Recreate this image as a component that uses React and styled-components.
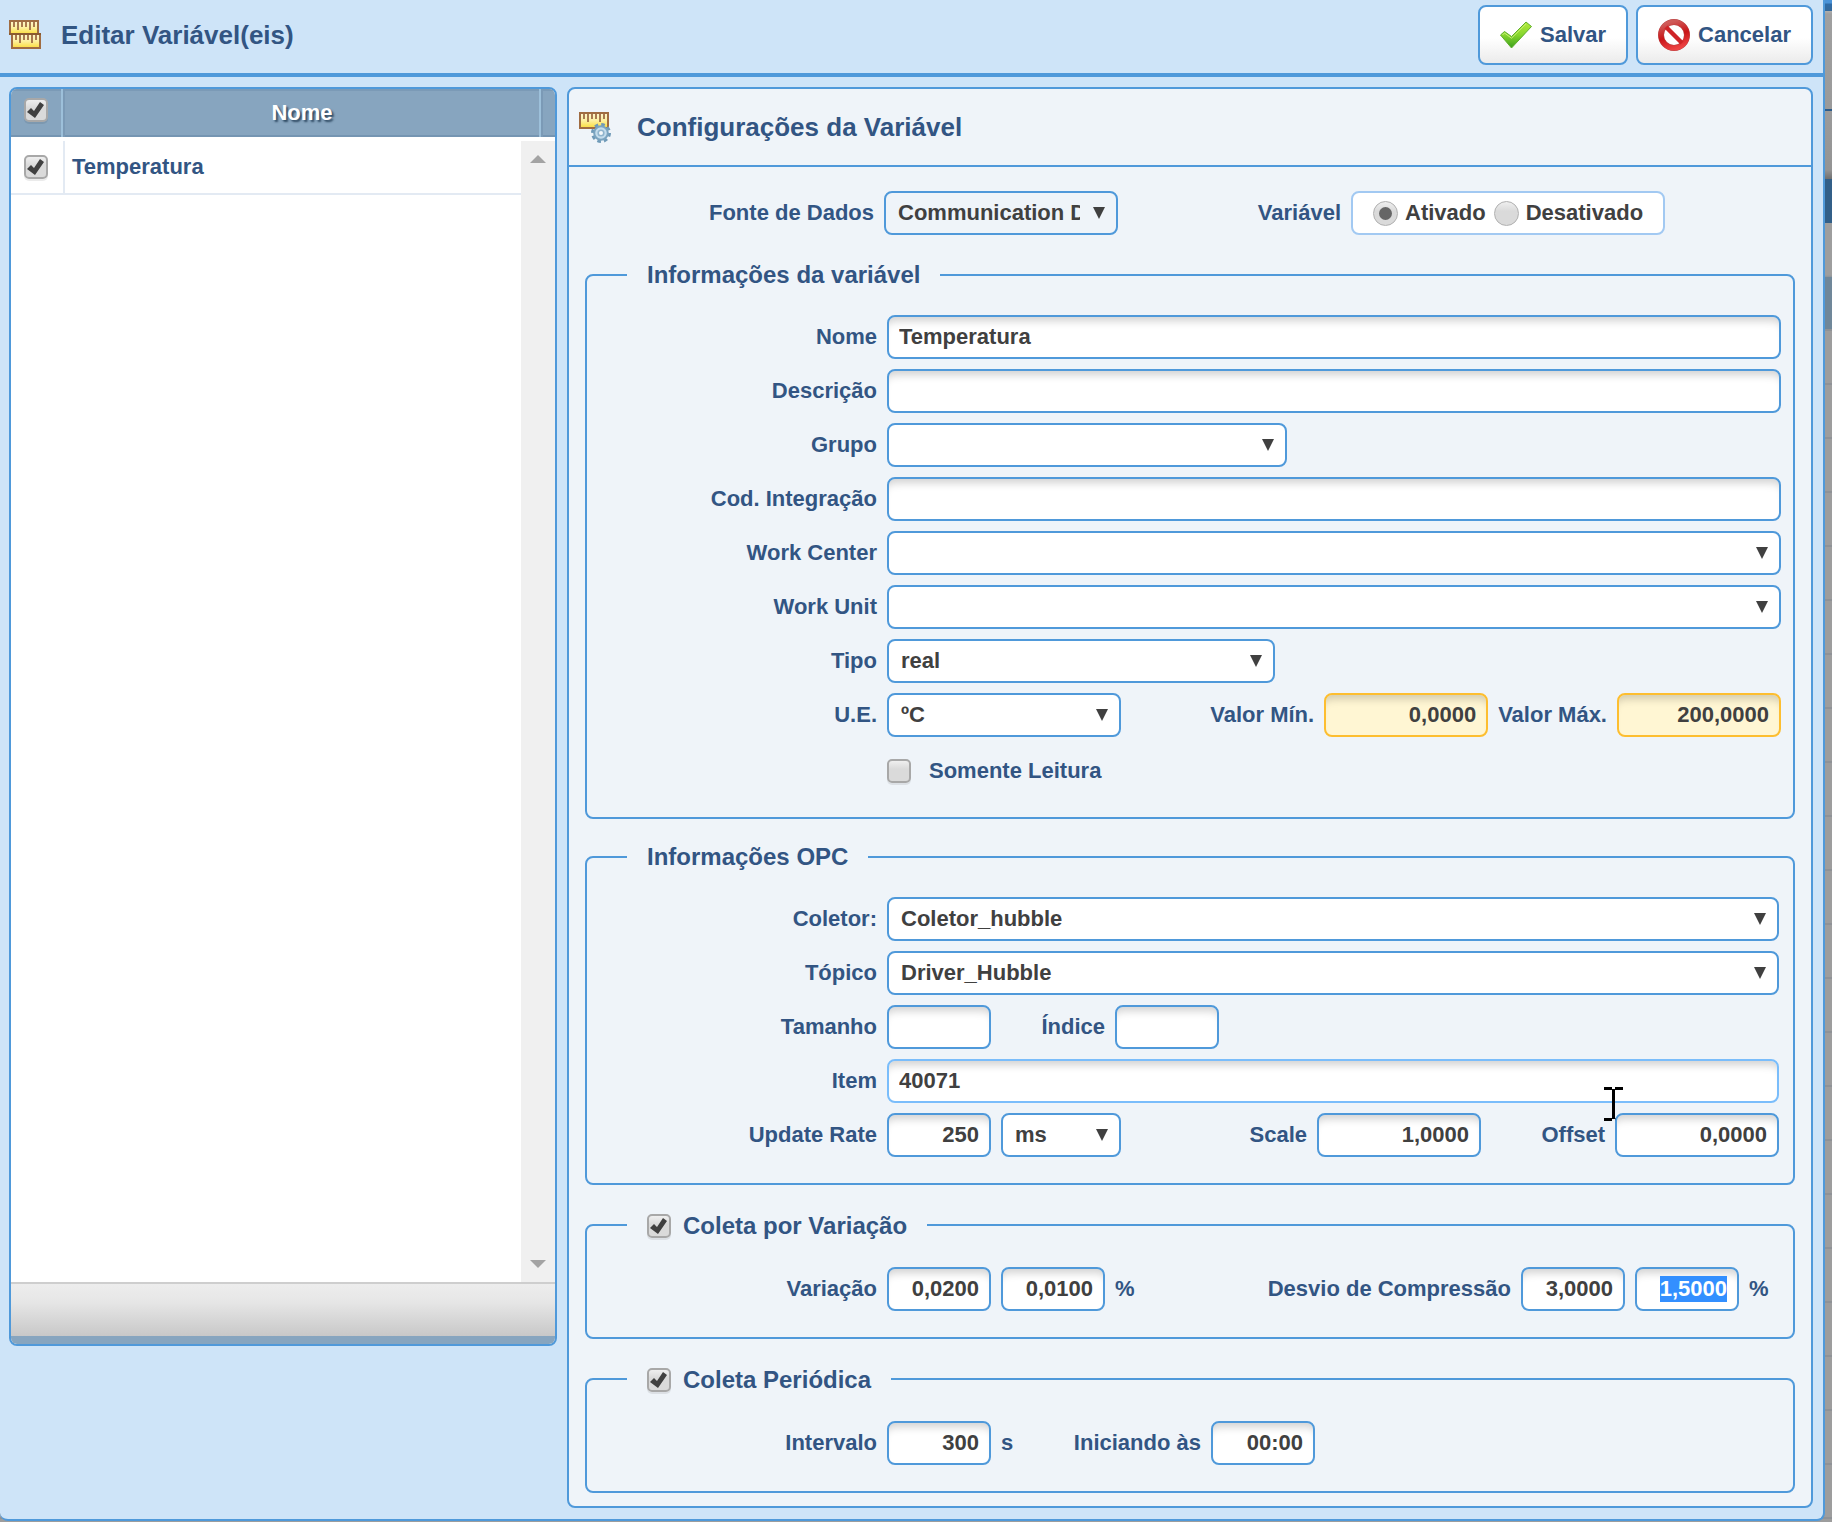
import React, { useEffect, useRef } from 'react'
import styled, { createGlobalStyle, css } from 'styled-components'

const rows = [{ id: 1, name: 'Temperatura' }];

const RulerIcon = () => (
    <svg width="32" height="30" viewBox="0 0 32 30" aria-hidden="true">
        <defs>
            <linearGradient id="ruler" x1="0" y1="0" x2="0" y2="1">
                <stop offset="0" stopColor="#fdf6cf" />
                <stop offset="0.5" stopColor="#fdf0a0" />
                <stop offset="1" stopColor="#fbdc3c" />
            </linearGradient>
        </defs>
        <rect x="1" y="1" width="28" height="13" fill="url(#ruler)" stroke="#a06c42" strokeWidth="2" />
        <path d="M5 2v5M9 2v8M13 2v5M17 2v5M21 2v8M25 2v5" stroke="#a8794f" strokeWidth="2" />
        <rect x="3" y="14" width="28" height="14" fill="url(#ruler)" stroke="#a06c42" strokeWidth="2" />
        <path d="M0 14h32" stroke="#8a5a30" strokeWidth="2" />
        <path d="M7 15v5M11 15v8M15 15v5M19 15v5M23 15v8M27 15v5" stroke="#a8794f" strokeWidth="2" />
    </svg>
)

const RulerGearIcon = () => (
    <svg width="32" height="31" viewBox="0 0 32 31" aria-hidden="true">
        <rect x="1" y="1" width="28" height="15" fill="url(#ruler)" stroke="#a06c42" strokeWidth="2" />
        <path d="M5 2v5M9 2v8M13 2v5M17 2v5M21 2v8M25 2v5" stroke="#a8794f" strokeWidth="2" />
        <circle cx="22" cy="21" r="8.5" fill="none" stroke="#6f9ab8" strokeWidth="3" strokeDasharray="3.6 3.07" />
        <circle cx="22" cy="21" r="6.8" fill="#c3dcec" stroke="#7ba4c0" strokeWidth="2" />
        <circle cx="22" cy="21" r="2.8" fill="#f4f8fb" stroke="#8fb4cd" strokeWidth="1.6" />
    </svg>
)

const CheckIcon = () => (
    <svg width="32" height="32" viewBox="0 0 32 32" aria-hidden="true">
        <defs>
            <linearGradient id="check" x1="0" y1="0" x2="0" y2="1">
                <stop offset="0" stopColor="#b4ea3c" />
                <stop offset="0.5" stopColor="#86d62e" />
                <stop offset="1" stopColor="#3a9f1c" />
            </linearGradient>
        </defs>
        <path d="M0.5 16l4-3.5 7 5L26 3l5.5 4.5L11.5 29z" fill="url(#check)" stroke="#5fae2c" strokeLinejoin="round" />
        <path d="M2.5 16l2-2 7 5.2L26 4.8" fill="none" stroke="#c9f078" strokeWidth="1" />
    </svg>
)

const ForbidIcon = () => (
    <svg width="32" height="32" viewBox="0 0 32 32" aria-hidden="true">
        <defs>
            <linearGradient id="forbid" x1="0.4" y1="0" x2="0.7" y2="1">
                <stop offset="0" stopColor="#cf5a58" />
                <stop offset="0.5" stopColor="#c91518" />
                <stop offset="1" stopColor="#ee4444" />
            </linearGradient>
        </defs>
        <circle cx="16" cy="16" r="13" fill="#fff" stroke="#b84444" strokeWidth="6" />
        <circle cx="16" cy="16" r="13" fill="none" stroke="url(#forbid)" strokeWidth="5" />
        <path d="M8 8l16 16" stroke="#cf2427" strokeWidth="4.5" />
    </svg>
)

const Select = ({ id, label, value, width, tinted }) => (
    <SelectBox $width={width}>
        <SelectInput id={id} aria-label={label} defaultValue={value} $tinted={tinted}>
            <option>{value}</option>
        </SelectInput>
    </SelectBox>
)

const VariableList = () => (
    <ListPanel>
        <ListHead>
            <thead>
                <tr>
                    <CheckHead><Checkbox type="checkbox" defaultChecked aria-label="Selecionar todas" /></CheckHead>
                    <NameHead>Nome</NameHead>
                    <EndHead />
                </tr>
            </thead>
        </ListHead>
        <ListScroll>
            <ListRows>
                <tbody>
                    {rows.map(row =>
                        <tr key={row.id}>
                            <CheckCell><Checkbox type="checkbox" defaultChecked aria-label={row.name} /></CheckCell>
                            <NameCell>{row.name}</NameCell>
                        </tr>
                    )}
                </tbody>
            </ListRows>
            <ScrollTrack aria-hidden="true">
                <svg width="16" height="8" viewBox="0 0 16 8"><path d="M8 0l8 8H0z" fill="#a3a3a3" /></svg>
                <svg width="16" height="8" viewBox="0 0 16 8"><path d="M0 0h16L8 8z" fill="#a3a3a3" /></svg>
            </ScrollTrack>
        </ListScroll>
        <ListFooter />
    </ListPanel>
)

const App = () => {

    const deviationRef = useRef();

    useEffect(() => {
        deviationRef.current.focus();
        deviationRef.current.select();
    }, [])

    return (
        <Page>
            <GlobalStyle />
            <Dialog>
                <TitleBar>
                    <RulerIcon />
                    <Title>Editar Variável(eis)</Title>
                    <Button type="button"><CheckIcon />Salvar</Button>
                    <Button type="button"><ForbidIcon />Cancelar</Button>
                </TitleBar>
                <Body>
                    <VariableList />
                    <Config>
                        <ConfigHeader>
                            <RulerGearIcon />
                            <ConfigTitle>Configurações da Variável</ConfigTitle>
                        </ConfigHeader>
                        <Form>
                            <TopRow>
                                <Label htmlFor="source" $width={289}>Fonte de Dados</Label>
                                <Select id="source" value="Communication Driver" width={234} tinted />
                                <Label as="span" id="status" $width={213}>Variável</Label>
                                <RadioGroup role="radiogroup" aria-labelledby="status">
                                    <RadioLabel><Radio type="radio" name="status" defaultChecked />Ativado</RadioLabel>
                                    <RadioLabel><Radio type="radio" name="status" />Desativado</RadioLabel>
                                </RadioGroup>
                            </TopRow>

                            <Fieldset>
                                <Legend>Informações da variável</Legend>
                                <Row>
                                    <Label htmlFor="name" $width={290}>Nome</Label>
                                    <Input id="name" defaultValue="Temperatura" />
                                </Row>
                                <Row>
                                    <Label htmlFor="description" $width={290}>Descrição</Label>
                                    <Input id="description" />
                                </Row>
                                <Row>
                                    <Label htmlFor="group" $width={290}>Grupo</Label>
                                    <Select id="group" value="" width={400} />
                                </Row>
                                <Row>
                                    <Label htmlFor="code" $width={290}>Cod. Integração</Label>
                                    <Input id="code" />
                                </Row>
                                <Row>
                                    <Label htmlFor="center" $width={290}>Work Center</Label>
                                    <Select id="center" value="" />
                                </Row>
                                <Row>
                                    <Label htmlFor="unit" $width={290}>Work Unit</Label>
                                    <Select id="unit" value="" />
                                </Row>
                                <Row>
                                    <Label htmlFor="type" $width={290}>Tipo</Label>
                                    <Select id="type" value="real" width={388} />
                                </Row>
                                <Row>
                                    <Label htmlFor="ue" $width={290}>U.E.</Label>
                                    <Select id="ue" value="ºC" width={234} />
                                    <Spacer />
                                    <Label htmlFor="min">Valor Mín.</Label>
                                    <Input id="min" $width={164} $number $warn defaultValue="0,0000" />
                                    <Label htmlFor="max">Valor Máx.</Label>
                                    <Input id="max" $width={164} $number $warn defaultValue="200,0000" />
                                </Row>
                                <CheckRow>
                                    <Checkbox type="checkbox" id="readonly" />
                                    <Label htmlFor="readonly">Somente Leitura</Label>
                                </CheckRow>
                            </Fieldset>

                            <Fieldset $narrow>
                                <Legend>Informações OPC</Legend>
                                <Row>
                                    <Label htmlFor="collector" $width={290}>Coletor:</Label>
                                    <Select id="collector" value="Coletor_hubble" />
                                </Row>
                                <Row>
                                    <Label htmlFor="topic" $width={290}>Tópico</Label>
                                    <Select id="topic" value="Driver_Hubble" />
                                </Row>
                                <Row>
                                    <Label htmlFor="size" $width={290}>Tamanho</Label>
                                    <Input id="size" $width={104} />
                                    <Label htmlFor="index" $width={104}>Índice</Label>
                                    <Input id="index" $width={104} />
                                </Row>
                                <Row>
                                    <Label htmlFor="item" $width={290}>Item</Label>
                                    <Input id="item" $hover defaultValue="40071" />
                                    <TextCursor width="19" height="34" viewBox="0 0 19 34" aria-hidden="true">
                                        <path d="M0 1.5h8M11 1.5h8M0 32.5h8M11 32.5h8" stroke="#000" strokeWidth="3" />
                                        <path d="M9.5 2v30" stroke="#000" strokeWidth="3" />
                                    </TextCursor>
                                </Row>
                                <Row>
                                    <Label htmlFor="rate" $width={290}>Update Rate</Label>
                                    <Input id="rate" $width={104} $number defaultValue="250" />
                                    <Select label="Unidade do Update Rate" value="ms" width={120} />
                                    <Spacer />
                                    <Label htmlFor="scale">Scale</Label>
                                    <Input id="scale" $width={164} $number defaultValue="1,0000" />
                                    <Label htmlFor="offset" $width={114}>Offset</Label>
                                    <Input id="offset" $width={164} $number defaultValue="0,0000" />
                                </Row>
                            </Fieldset>

                            <Fieldset $narrow>
                                <Legend>
                                    <LegendCheck>
                                        <Checkbox type="checkbox" defaultChecked />Coleta por Variação
                                    </LegendCheck>
                                </Legend>
                                <Row>
                                    <Label htmlFor="variation" $width={290}>Variação</Label>
                                    <Input id="variation" $width={104} $number defaultValue="0,0200" />
                                    <Input aria-label="Variação (%)" $width={104} $number defaultValue="0,0100" />
                                    <Unit>%</Unit>
                                    <Spacer />
                                    <Label htmlFor="deviation">Desvio de Compressão</Label>
                                    <Input id="deviation" $width={104} $number defaultValue="3,0000" />
                                    <Input
                                        ref={deviationRef}
                                        aria-label="Desvio de Compressão (%)"
                                        $width={104}
                                        $number
                                        defaultValue="1,5000"
                                    />
                                    <Unit>%</Unit>
                                </Row>
                            </Fieldset>

                            <Fieldset $narrow>
                                <Legend>
                                    <LegendCheck>
                                        <Checkbox type="checkbox" defaultChecked />Coleta Periódica
                                    </LegendCheck>
                                </Legend>
                                <Row>
                                    <Label htmlFor="interval" $width={290}>Intervalo</Label>
                                    <Input id="interval" $width={104} $number defaultValue="300" />
                                    <Unit>s</Unit>
                                    <Label htmlFor="start" $width={160}>Iniciando às</Label>
                                    <Input id="start" $width={104} $number defaultValue="00:00" />
                                </Row>
                            </Fieldset>
                        </Form>
                    </Config>
                </Body>
            </Dialog>
        </Page>
    )
}
export default App;

const GlobalStyle = createGlobalStyle`
    *, *::before, *::after {
        box-sizing: border-box;
    }
    body {
        margin: 0;
        font: bold 22px/26px "Liberation Sans", Arial, sans-serif;
        color: #325583;
    }
    input, select, button {
        font: inherit;
        outline: none;
    }
    ::selection {
        background: #338fff;
        color: #fff;
    }
    svg {
        flex: none;
        display: block;
    }
`;

/* dimmed screen that stays visible around the dialog */
const Page = styled.div`
    min-height: 100vh;
    padding: 0 7px 2px 0;
    background:
        linear-gradient(
            #4a93d8 3px, #2f6ca8 4px, #35699a 11px, #b0b0b0 11px, #a0a0a0 14px, #9a9a9a 109px,
            #2d5c8a 109px, #2d5c8a 111px, #9b9b9b 111px, #949494 170px, #707070 179px,
            #325f88 179px, #325f88 223px, #9e9e9e 223px, #9e9e9e 275px, #8b939a 277px,
            #708799 277px, #708799 329px, transparent 329px
        ),
        repeating-linear-gradient(#9d9d9d 0 5px, #8f9296 5px 7px, #9d9d9d 7px 54px);
`;

const Dialog = styled.div`
    background: #cee4f8;
    border: solid #4f99da;
    border-width: 0 2px 2px 0;
    border-radius: 0 0 8px 8px;
`;

const TitleBar = styled.header`
    display: flex;
    align-items: center;
    gap: 8px;
    padding: 5px 10px 8px 9px;
    border-bottom: 4px solid #4f99da;
`;

const Title = styled.h1`
    flex: 1;
    margin: 0 0 0 12px;
    font-size: 26px;
    line-height: 30px;
`;

const Button = styled.button`
    display: flex;
    align-items: center;
    gap: 8px;
    height: 60px;
    padding: 0 20px;
    color: #325583;
    background: linear-gradient(#fff 55%, #ebebeb);
    border: 2px solid #4f99da;
    border-radius: 8px;
`;

const Body = styled.main`
    display: grid;
    grid-template-columns: 548px minmax(0, 1fr);
    gap: 10px;
    align-items: start;
    padding: 10px 10px 11px 9px;
`;

const ListPanel = styled.section`
    display: flex;
    flex-direction: column;
    height: calc(100vh - 263px);
    background: #fff;
    border: 2px solid #4f99da;
    border-radius: 8px;
    overflow: hidden;
`;

const Table = styled.table`
    width: 100%;
    table-layout: fixed;
    border-collapse: separate;
    border-spacing: 0;
`;

const ListHead = styled(Table)`
    height: 48px;
    background: #87a5bf;
    box-shadow: inset 0 2px #7b9ab6, inset 0 -2px #7595b2;
`;

const Th = styled.th`
    padding: 0;
    border-left: 2px solid #7b9ab6;
    border-right: 2px solid #9dc0da;
`;
const CheckHead = styled(Th)`
    width: 52px;
    padding: 9px 0 0 13px;
    vertical-align: top;
    border-left: 0;
`;
const NameHead = styled(Th)`
    color: #fff;
    text-shadow: 2px 2px 2px #2f4a63;
`;
const EndHead = styled(Th)`
    width: 14px;
    border-right: 0;
`;

const ListScroll = styled.div`
    flex: 1;
    display: flex;
    align-items: flex-start;
    min-height: 0;
    padding-top: 4px;
`;

const ListRows = styled(Table)`
    flex: 1;
`;

const Td = styled.td`
    height: 54px;
    padding: 0;
    border-bottom: 2px solid #e3eaf3;
`;
const CheckCell = styled(Td)`
    width: 54px;
    padding-left: 13px;
    border-right: 2px solid #e3eaf3;
`;
const NameCell = styled(Td)`
    padding-left: 7px;
`;

const ScrollTrack = styled.div`
    align-self: stretch;
    display: flex;
    flex-direction: column;
    justify-content: space-between;
    align-items: center;
    width: 34px;
    padding: 14px 0;
    background: #f0f0f0;
`;

const ListFooter = styled.footer`
    height: 62px;
    background: linear-gradient(#ededed, #e6e6e6 35%, #c8c8c8);
    border-top: 2px solid #cecece;
    border-bottom: 8px solid #87a5bf;
`;

const Config = styled.section`
    background: #eff4f9;
    border: 2px solid #4f99da;
    border-radius: 8px;
`;

const ConfigHeader = styled.header`
    display: flex;
    align-items: center;
    gap: 26px;
    height: 78px;
    padding-left: 10px;
    border-bottom: 2px solid #4f99da;
`;

const ConfigTitle = styled.h2`
    margin: 0;
    font-size: 26px;
    line-height: 30px;
`;

const Form = styled.form`
    display: flex;
    flex-direction: column;
    gap: 24px;
    padding: 24px 16px 13px;
`;

const Row = styled.div`
    position: relative;
    display: flex;
    align-items: center;
    gap: 10px;
    min-height: 44px;
`;

const TopRow = styled(Row)`
    padding-bottom: 2px;
`;

const CheckRow = styled(Row)`
    gap: 18px;
    min-height: 48px;
    padding-left: 300px;
`;

const Fieldset = styled.fieldset`
    min-width: 0;
    margin: 0;
    padding: 26px ${({ $narrow }) => $narrow ? '14px 26px' : '12px 22px'} 0;
    border: 2px solid #4f99da;
    border-radius: 8px;

    ${Row} + ${Row} {
        margin-top: 10px;
    }
`;

const Legend = styled.legend`
    margin-left: 40px;
    padding: 0 20px;
    font-size: 24px;
    line-height: 28px;
`;

const LegendCheck = styled.label`
    display: flex;
    align-items: center;
    gap: 12px;
    padding-top: 2px;
    line-height: 30px;
`;

const Label = styled.label`
    flex: 0 1 ${({ $width }) => $width ? `${$width}px` : 'auto'};
    text-align: right;
    white-space: nowrap;
`;

const Unit = styled.span`
    min-width: 30px;
`;

const Spacer = styled.div`
    flex: 1;
`;

const field = css`
    width: 100%;
    height: 44px;
    color: #404040;
    border: 2px solid #4f99da;
    border-radius: 8px;
`;

const Input = styled.input.attrs({ autoComplete: 'off' })`
    ${field}
    flex: ${({ $width }) => $width ? `0 1 ${$width}px` : '1'};
    min-width: 0;
    padding: 0 10px;
    background: #fff;
    box-shadow: inset 0 10px 8px -6px rgba(0, 0, 0, 0.18);
    text-align: ${({ $number }) => $number ? 'right' : 'left'};

    ${({ $hover }) => $hover && css`
        border-color: #7abdfb;
    `}
    ${({ $warn }) => $warn && css`
        background: #fff6d3;
        border-color: #fdbe30;
    `}
`;

const SelectBox = styled.div`
    position: relative;
    flex: ${({ $width }) => $width ? `0 1 ${$width}px` : '1'};
    min-width: 0;

    &::after {
        content: '';
        position: absolute;
        top: 16px;
        right: 13px;
        border: solid transparent;
        border-width: 12px 6px 0;
        border-top-color: #404040;
        pointer-events: none;
    }
`;

const SelectInput = styled.select`
    ${field}
    display: block;
    padding: 0 36px 0 12px;
    appearance: none;
    background: ${({ $tinted }) => $tinted ? '#eff4f9' : '#fff'};
`;

const Checkbox = styled.input`
    flex: none;
    display: block;
    width: 24px;
    height: 24px;
    margin: 0;
    appearance: none;
    background: linear-gradient(#efefef, #dadada 40%);
    border: 2px solid #a8a8a8;
    border-radius: 5px;
    box-shadow: 0 2px rgba(0, 0, 0, 0.08);

    &:checked::before {
        content: '';
        display: block;
        width: 20px;
        height: 20px;
        background: #404040;
        clip-path: polygon(1px 12px, 5px 8px, 8px 11px, 14px 2px, 18px 5px, 9px 18px);
    }
`;

const RadioGroup = styled.div`
    display: flex;
    align-items: center;
    gap: 8px;
    height: 44px;
    padding: 0 20px;
    color: #404040;
    background: #fff;
    border: 2px solid #a2c9f2;
    border-radius: 8px;
`;

const RadioLabel = styled.label`
    display: flex;
    align-items: center;
    gap: 7px;
`;

const Radio = styled.input`
    display: grid;
    place-items: center;
    width: 25px;
    height: 25px;
    margin: 0;
    appearance: none;
    background: linear-gradient(#efefef, #dadada 40%);
    border: 1px solid #b0b0b0;
    border-radius: 50%;

    &:checked::before {
        content: '';
        width: 13px;
        height: 13px;
        background: #666;
        border-radius: 50%;
    }
`;

const TextCursor = styled.svg`
    position: absolute;
    top: 28px;
    right: 156px;
    pointer-events: none;
`;
